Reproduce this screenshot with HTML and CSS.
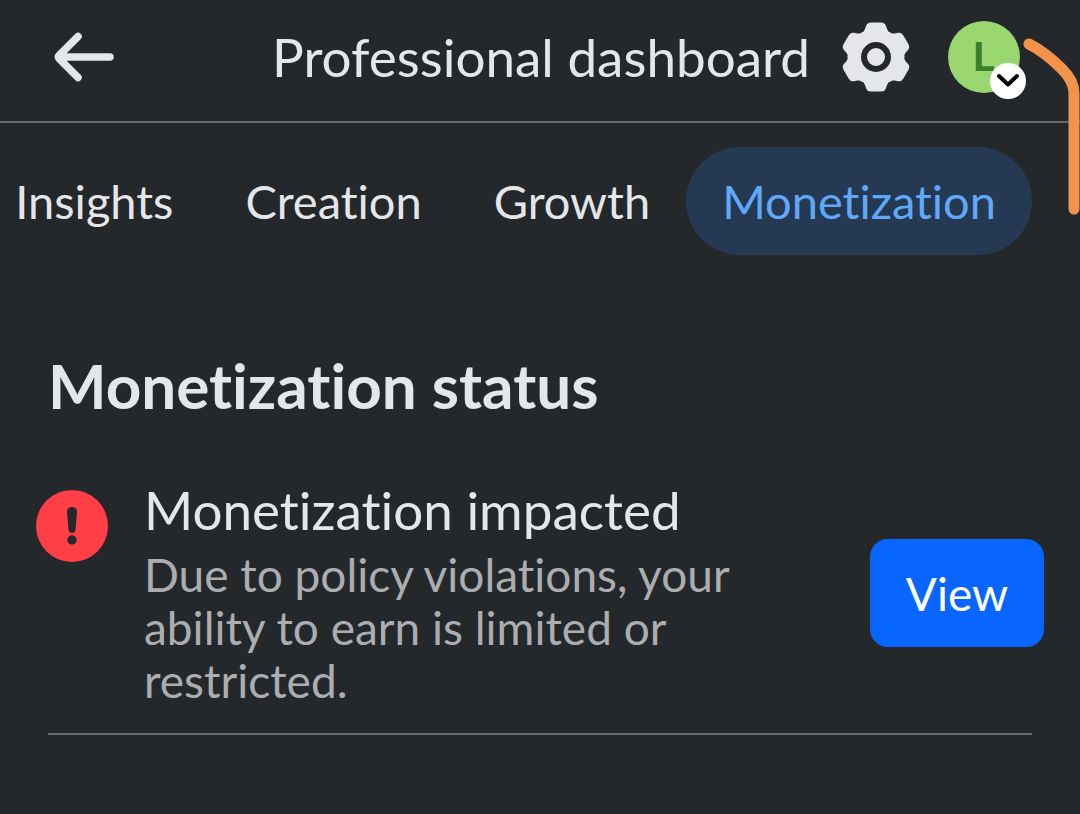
FILE: index.html
```html
<!DOCTYPE html>
<html lang="en">
<head>
  <meta charset="UTF-8">
  <meta name="viewport" content="width=device-width, initial-scale=1.0">
  <title>Professional dashboard</title>
  <link rel="stylesheet" href="styles.css">
</head>
<body>
  <header class="topbar">
    <button class="icon-btn back" aria-label="Back">
      <svg width="60" height="50" viewBox="0 0 60 50">
        <path d="M24 4.5 L5.5 23 Q3.5 25 5.5 27 L24 45.5 M6 25 H56" fill="none" stroke="#e4e6e9" stroke-width="7.5" stroke-linecap="round" stroke-linejoin="round"/>
      </svg>
    </button>
    <h1>Professional dashboard</h1>
    <button class="icon-btn" aria-label="Settings">
      <svg width="72" height="72" viewBox="-36 -36 72 72" fill="#e4e6e9">
        <defs>
          <path id="tooth" d="M0 0 L-15 -24 Q-12 -25 -11 -28 L-10 -31 Q-9 -34.5 -5 -34.5 H5 Q9 -34.5 10 -31 L11 -28 Q12 -25 15 -24 Z"/>
        </defs>
        <circle r="27"/>
        <use href="#tooth"/>
        <use href="#tooth" transform="rotate(60)"/>
        <use href="#tooth" transform="rotate(120)"/>
        <use href="#tooth" transform="rotate(180)"/>
        <use href="#tooth" transform="rotate(240)"/>
        <use href="#tooth" transform="rotate(300)"/>
        <circle r="12" fill="none" stroke="#25282a" stroke-width="6"/>
      </svg>
    </button>
    <button class="avatar" aria-label="Switch profile">
      L
      <span class="avatar-badge">
        <svg width="24" height="16" viewBox="0 0 24 16">
          <path d="M3 3 L12 11.5 L21 3" fill="none" stroke="#000" stroke-width="4" stroke-linecap="round" stroke-linejoin="round"/>
        </svg>
      </span>
    </button>
  </header>

  <nav class="tabs">
    <a href="#insights">Insights</a>
    <a href="#creation">Creation</a>
    <a href="#growth">Growth</a>
    <a href="#monetization" class="active">Monetization</a>
  </nav>

  <main>
    <h2>Monetization status</h2>
    <section class="status">
      <svg class="status-icon" width="72" height="72" viewBox="0 0 72 72">
        <circle cx="36" cy="36" r="36" fill="#ff3e46"/>
        <path d="M31 22 Q31 17 36 17 Q41 17 41 22 L39.5 39.5 Q39 43 36 43 Q33 43 32.5 39.5 Z" fill="#25282a"/>
        <circle cx="36" cy="50" r="4.7" fill="#25282a"/>
      </svg>
      <div class="status-text">
        <h3>Monetization impacted</h3>
        <p>Due to policy violations, your ability to earn is limited or restricted.</p>
      </div>
      <button class="view-btn">View</button>
    </section>
  </main>

  <!-- hand drawn marker line -->
  <svg class="marker" width="60" height="180" viewBox="0 0 60 180">
    <path d="M9 8 C23 15 35 26 42 33 C50 41 54 49 54 57 V173" fill="none" stroke="#f3934b" stroke-width="11" stroke-linecap="round"/>
  </svg>
</body>
</html>
```
FILE: styles.css
```css
* {
  box-sizing: border-box;
}

body {
  margin: 0;
  position: relative;
  min-height: 100vh;
  background: #25282a;
  color: #e4e6e9;
  font-family: Lato, sans-serif;
  font-variant-ligatures: none;
  overflow-x: hidden;
}

h1, h2, h3, p {
  margin: 0;
  font-weight: 400;
}

button {
  border: 0;
  padding: 0;
  font-family: inherit;
  cursor: pointer;
}

svg {
  display: block;
}

/* Header */
.topbar {
  display: flex;
  align-items: center;
  height: 123px;
  padding: 0 60px 8px 54px;
  border-bottom: 2px solid #66686a;
}

.icon-btn {
  background: none;
}

.back {
  margin-right: auto;
}

.topbar h1 {
  margin-right: 30px;
  font-size: 53px;
  line-height: 64px;
}

.avatar {
  position: relative;
  width: 72px;
  height: 72px;
  margin-left: 36px;
  padding-top: 2px;
  border-radius: 50%;
  background: #9bd770;
  color: #3a7f2c;
  font-family: Roboto, sans-serif;
  font-size: 40px;
  font-weight: 700;
}

.avatar-badge {
  position: absolute;
  right: -6px;
  bottom: -6px;
  display: flex;
  align-items: center;
  justify-content: center;
  width: 36px;
  height: 36px;
  border-radius: 50%;
  background: #fff;
}

/* Tabs */
.tabs {
  display: flex;
  justify-content: flex-end;
  padding: 24px 48px 0 0;
  overflow: hidden;
}

.tabs a {
  padding: 0 36px;
  border-radius: 54px;
  color: inherit;
  font-size: 47px;
  line-height: 108px;
  text-decoration: none;
}

.tabs .active {
  background: #253a52;
  color: #5fa8fa;
}

/* Monetization status */
main {
  padding: 94px 36px 0;
}

h2 {
  padding-left: 12px;
  font-size: 62px;
  font-weight: 700;
  line-height: 72px;
}

.status {
  display: flex;
  align-items: flex-start;
  position: relative;
  padding: 58px 0 28px;
}

.status::after {
  content: "";
  position: absolute;
  left: 12px;
  right: 12px;
  bottom: 0;
  height: 2px;
  background: #66686a;
}

.status-icon {
  flex: none;
  margin-top: 11px;
}

.status-text {
  flex: 1;
  padding: 0 100px 0 36px;
}

.status h3 {
  margin-bottom: 8px;
  font-size: 53px;
  line-height: 61px;
}

.status p {
  color: #abadb0;
  font-size: 46px;
  line-height: 53px;
}

.view-btn {
  flex: none;
  align-self: center;
  width: 174px;
  height: 108px;
  border-radius: 18px;
  background: #0866ff;
  color: #fff;
  font-size: 46px;
}

.marker {
  position: absolute;
  top: 36px;
  right: 0;
  pointer-events: none;
}
```
